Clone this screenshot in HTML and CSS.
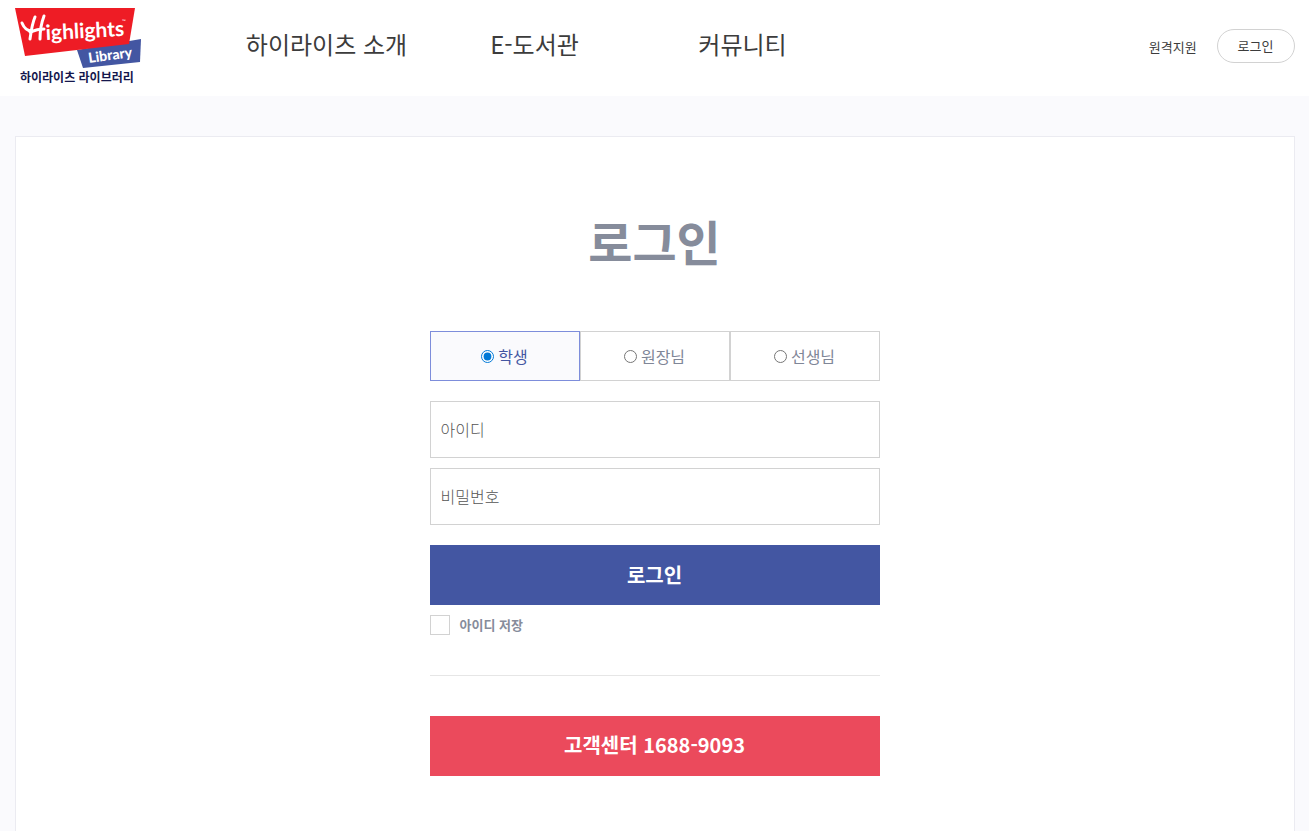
FILE: index.html
```
<!DOCTYPE html>
<html lang="ko">
<head>
  <meta charset="UTF-8">
  <meta name="viewport" content="width=device-width, initial-scale=1">
  <title>하이라이츠 라이브러리 - 로그인</title>
  <link rel="stylesheet" href="styles.css">
</head>
<body>
  <header class="header">
    <div class="inner">
      <a href="#" class="logo">
        <svg width="128" height="80" viewBox="0 0 128 80" role="img" aria-label="Highlights Library">
          <polygon class="logo-blue" points="62,42 126,31 125,54 68,60"/>
          <polygon class="logo-red" points="0,0 120,0 114,36 10,48"/>
          <!-- H -->
          <g class="logo-stroke">
            <path d="M7 15 C9 20 12 23 17 23"/>
            <path d="M20 9 C17 16 16 24 15 31"/>
            <path d="M29 8 C26 16 25 24 25 31"/>
            <path d="M15 24 C20 22 25 21 29 21"/>
          </g>
          <text class="logo-main" x="31" y="32" transform="rotate(-3 31 32)">ighlights</text>
          <text class="logo-tm" x="107" y="15">™</text>
          <text class="logo-sub" x="74" y="55" transform="rotate(-8 74 55)">Library</text>
          <text class="logo-kr" x="5" y="74">하이라이츠 라이브러리</text>
        </svg>
      </a>
      <nav class="gnb">
        <a href="#">하이라이츠 소개</a>
        <a href="#">E-도서관</a>
        <a href="#">커뮤니티</a>
      </nav>
      <div class="util">
        <a href="#">원격지원</a>
        <a href="#" class="btn-round">로그인</a>
      </div>
    </div>
  </header>

  <main class="content">
    <h1>로그인</h1>
    <form class="login" onsubmit="return false;">
      <div class="tabs">
        <label><input type="radio" name="userType" value="student" checked><span>학생</span></label>
        <label><input type="radio" name="userType" value="director"><span>원장님</span></label>
        <label><input type="radio" name="userType" value="teacher"><span>선생님</span></label>
      </div>
      <input type="text" class="field" name="userId" placeholder="아이디" aria-label="아이디">
      <input type="password" class="field" name="userPw" placeholder="비밀번호" aria-label="비밀번호">
      <button type="submit" class="btn btn-login">로그인</button>
      <label class="save"><input type="checkbox" name="saveId"><span>아이디 저장</span></label>
      <hr>
      <a href="tel:1688-9093" class="btn btn-call">고객센터 1688-9093</a>
    </form>
  </main>
</body>
</html>
```

FILE: styles.css
```
* { box-sizing: border-box; }
body {
  margin: 0;
  min-height: 100vh;
  display: flex;
  flex-direction: column;
  background: #fafafd;
  color: #3c3c3c;
  font-family: "Noto Sans CJK KR", sans-serif;
  font-size: 16px;
}
a { color: inherit; text-decoration: none; }

/* header */
.header { background: #fff; height: 96px; }
.inner {
  max-width: 1280px;
  height: 100%;
  margin: 0 auto;
  display: flex;
  align-items: flex-start;
}
.logo { flex: none; padding-top: 8px; }
.logo svg { display: block; }
.logo-red { fill: #ee1c25; }
.logo-blue { fill: #4356a2; }
.logo-stroke { fill: none; stroke: #fff; stroke-width: 3; stroke-linecap: round; }
.logo-main { font: bold 21px Lato, sans-serif; fill: #fff; }
.logo-tm { font: 5px Lato, sans-serif; fill: #fff; }
.logo-sub { font: 900 14px Lato, sans-serif; fill: #fff; }
.logo-kr { font: bold 12px "Noto Sans CJK KR", sans-serif; fill: #15174d; }

.gnb { display: flex; margin-left: 80px; }
.gnb a {
  width: 208px;
  text-align: center;
  font-size: 24px;
  line-height: 88px;
  white-space: nowrap;
}
.util {
  display: flex;
  align-items: center;
  gap: 20px;
  margin-left: auto;
  padding-top: 29px;
  font-size: 13px;
}
.btn-round {
  padding: 0 20px;
  border: 1px solid #d2d2d2;
  border-radius: 17px;
  line-height: 32px;
}

/* login */
.content {
  flex: 1;
  width: 100%;
  max-width: 1280px;
  margin: 40px auto 0;
  padding: 68px 20px 54px;
  background: #fff;
  border: 1px solid #ebebf1;
  border-bottom: 0;
}
h1 {
  margin: 0 0 56px;
  color: #868c9b;
  font-size: 48px;
  line-height: 70px;
  text-align: center;
}
.login { max-width: 450px; margin: 0 auto; }
.tabs { display: flex; margin-bottom: 20px; }
.tabs label {
  flex: 1;
  display: flex;
  align-items: center;
  justify-content: center;
  gap: 4px;
  height: 50px;
  border: 1px solid #d2d2d2;
  color: #7f8697;
}
.tabs label:has(:checked) {
  background: #fafafd;
  border-color: #7d8ddb;
  color: #4356a2;
}
.tabs input { margin: 0; accent-color: #0078d7; }
.field {
  display: block;
  width: 100%;
  height: 57px;
  margin-bottom: 10px;
  padding: 0 10px 2px;
  border: 1px solid #d2d2d2;
  background: #fff;
  font-family: inherit;
  font-size: 16px;
  font-weight: 300;
}
.field::placeholder { color: #555; }
.btn {
  display: block;
  width: 100%;
  height: 60px;
  padding: 0;
  border: 0;
  color: #fff;
  font-family: inherit;
  font-size: 20px;
  font-weight: bold;
  line-height: 58px;
  text-align: center;
}
.btn-login { margin-top: 20px; background: #4356a2; }
.btn-call { background: #eb4a5c; }
.save {
  display: flex;
  align-items: center;
  gap: 10px;
  margin-top: 10px;
  color: #868c9b;
  font-size: 13px;
  font-weight: bold;
  line-height: 20px;
}
.save input {
  appearance: none;
  width: 20px;
  height: 20px;
  margin: 0;
  border: 1px solid #d2d2d2;
}
.save input:checked { background: #4356a2; }
hr { margin: 40px 0; border: 0; border-top: 1px solid #e6e6e6; }
```
